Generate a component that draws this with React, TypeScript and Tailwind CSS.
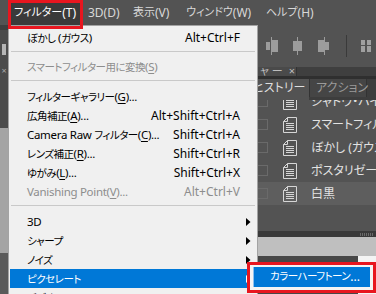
import type { ReactNode } from 'react';

type MenuItem =
  | { kind: 'sep'; line: string }
  | {
      kind: 'item';
      label: ReactNode;
      shortcut?: string;
      disabled?: boolean;
      sub?: boolean;
      active?: boolean;
    };

// Japanese runs are set a touch smaller so kana widths come near Meiryo UI
const J = ({ children }: { children: ReactNode }) => (
  <span className="text-[10.5px] tracking-[-0.5px]">{children}</span>
);
const B = ({ children }: { children: ReactNode }) => <span className="text-[11px]">{children}</span>;
const u = (c: string) => <span className="underline underline-offset-2">{c}</span>;

const menuItems: MenuItem[] = [
  { kind: 'item', label: <><J>ぼかし</J> (<J>ガウス</J>)</>, shortcut: 'Alt+Ctrl+F' },
  { kind: 'sep', line: 'h-[10px] pt-[4px]' },
  { kind: 'item', label: <><J>スマートフィルター用に変換</J>({u('S')})</>, disabled: true },
  { kind: 'sep', line: 'h-[11px] pt-[4px]' },
  { kind: 'item', label: <><J>フィルターギャラリー</J>({u('G')})...</> },
  { kind: 'item', label: <><J>広角補正</J>({u('A')})...</>, shortcut: 'Alt+Shift+Ctrl+A' },
  { kind: 'item', label: <>Camera Raw <J>フィルター</J>({u('C')})...</>, shortcut: 'Shift+Ctrl+A' },
  { kind: 'item', label: <><J>レンズ補正</J>({u('R')})...</>, shortcut: 'Shift+Ctrl+R' },
  { kind: 'item', label: <><J>ゆがみ</J>({u('L')})...</>, shortcut: 'Shift+Ctrl+X' },
  { kind: 'item', label: <>Vanishing Point({u('V')})...</>, shortcut: 'Alt+Ctrl+V', disabled: true },
  { kind: 'sep', line: 'h-[11px] pt-[4px]' },
  { kind: 'item', label: '3D', sub: true },
  { kind: 'item', label: <J>シャープ</J>, sub: true },
  { kind: 'item', label: <J>ノイズ</J>, sub: true },
  { kind: 'item', label: <J>ピクセレート</J>, sub: true, active: true },
  { kind: 'item', label: <J>ビデオ</J>, sub: true },
];

const historyRows = [
  { label: 'シャドウ・ハイライト', selected: false },
  { label: 'スマートフィルター', selected: false },
  { label: 'ぼかし (ガウス)', selected: false },
  { label: 'ポスタリゼーション', selected: false },
  { label: '白黒', selected: true },
];

function Arrow({ white }: { white?: boolean }) {
  return (
    <svg width="5" height="8" viewBox="0 0 5 8">
      <polygon points="0,0 4.5,4 0,8" fill={white ? '#ffffff' : '#000000'} />
    </svg>
  );
}

function DocIcon() {
  return (
    <svg width="14" height="16" viewBox="0 0 14 16" fill="none" stroke="#d6d6d6">
      <path d="M4.5 0.5 H13.5 V15.5 H0.5 V4.5 Z" />
      <path d="M0.5 4.5 H4.5 V0.5" />
      <path d="M3 6.5 H11 M3 8.5 H11 M3 10.5 H11 M3 12.5 H11" />
    </svg>
  );
}

function AlignIcon({ variant }: { variant: number }) {
  return (
    <svg width="13" height="18" viewBox="0 0 13 18" fill="#9c9c9c">
      {variant === 0 && (
        <>
          <rect x="0" y="5" width="4" height="8" />
          <rect x="5" y="0" width="1" height="18" />
          <rect x="6" y="3" width="6" height="12" />
        </>
      )}
      {variant === 1 && (
        <>
          <rect x="1" y="4" width="4" height="10" />
          <rect x="5" y="0" width="1" height="18" />
          <rect x="6" y="4" width="4" height="10" />
        </>
      )}
      {variant === 2 && (
        <>
          <rect x="1" y="3" width="6" height="12" />
          <rect x="7" y="0" width="1" height="18" />
          <rect x="8" y="5" width="4" height="8" />
        </>
      )}
    </svg>
  );
}

export default function App() {
  return (
    <div className="relative flex h-[294px] w-[376px] flex-col overflow-hidden bg-[#535353] font-['Noto_Sans','Noto_Sans_CJK_JP',sans-serif] [font-feature-settings:'palt']">
      {/* Menu bar */}
      <div className="flex h-[25px] shrink-0 items-stretch pl-[11px] text-[12px] text-[#d8d8d8]">
        <span className="flex w-[69px] shrink-0 items-center bg-[#3a3a3a] pl-[3px] whitespace-nowrap text-white">
          <B>フィルター</B>(T)
        </span>
        <span className="ml-[8px] flex w-[45px] shrink-0 items-center whitespace-nowrap">3D(D)</span>
        <span className="flex w-[53px] shrink-0 items-center whitespace-nowrap">
          <B>表示</B>(V)
        </span>
        <span className="flex w-[80px] shrink-0 items-center whitespace-nowrap">
          <B>ウィンドウ</B>(W)
        </span>
        <span className="flex shrink-0 items-center whitespace-nowrap">
          <B>ヘルプ</B>(H)
        </span>
      </div>

      {/* Workspace behind the menu */}
      <div className="flex flex-1">
        <div className="flex w-[8px] shrink-0 flex-col">
          <div className="h-[5px] bg-[#3e3e3e]" />
          <div className="flex h-[98px] flex-col items-center bg-[#4b4b4b] pt-[14px]">
            <div className="h-[11px] w-[4px] bg-[#b5b5b5]" />
            <span className="mt-[11px] text-[9px] leading-none text-[#a8a8a8]">×</span>
          </div>
          <div className="h-[125px] bg-[#a4a4a4]" />
          <div className="flex-1 bg-[#5a5a5a]" />
        </div>
        <div className="flex-1" />
        <div className="flex w-[126px] shrink-0 flex-col">
          {/* toolbar */}
          <div className="flex h-[42px] shrink-0 items-center pl-[16px]">
            <AlignIcon variant={0} />
            <div className="w-[13px]" />
            <AlignIcon variant={1} />
            <div className="w-[12px]" />
            <AlignIcon variant={2} />
            <div className="ml-[16px] h-[22px] w-px bg-[#3a3a3a]" />
            <svg className="ml-[14px]" width="10" height="12" viewBox="0 0 10 12" fill="#a0a0a0">
              <rect x="0" y="0" width="4" height="12" />
              <rect x="6" y="0" width="4" height="12" />
              <rect x="0" y="5" width="10" height="1" fill="#535353" />
            </svg>
          </div>
          {/* partially hidden tab strip */}
          <div className="flex h-[9px] shrink-0 overflow-hidden bg-[#3f3f3f]">
            <div className="flex w-[47px] items-end gap-[6px] overflow-hidden border-r border-[#333333] bg-[#4a4a4a] pl-[10px] text-[11px] leading-[10px] whitespace-nowrap text-[#bdbdbd]">
              <span>ャ ー</span>
              <span>×</span>
            </div>
          </div>
          <div className="h-[3px] shrink-0 bg-[#2f2f2f]" />
          {/* tabs */}
          <div className="flex h-[21px] shrink-0 bg-[#3d3d3d] text-[12px] whitespace-nowrap">
            <div className="flex w-[59px] shrink-0 items-center bg-[#535353] pb-[3px] pl-[3px] text-[#dedede]">ヒストリー</div>
            <div className="flex h-[18px] w-[58px] shrink-0 items-center border-x border-[#333333] bg-[#454545] pl-[6px] text-[#9a9a9a]">
              アクション
            </div>
          </div>
          {/* history list */}
          <div className="h-[131px] shrink-0 overflow-hidden">
            <div className="-mt-[10px]">
              {historyRows.map((row, i) => (
                <div
                  key={i}
                  className={`flex h-[23px] items-center ${row.selected ? 'bg-[#5e5e5e]' : ''}`}
                >
                  <div className="ml-[7px] h-[11px] w-[11px] shrink-0 border border-[#6a6a6a]" />
                  <div className="ml-[15px] shrink-0">
                    <DocIcon />
                  </div>
                  <span className="ml-[14px] shrink-0 whitespace-nowrap text-[12px] text-[#e2e2e2]">{row.label}</span>
                </div>
              ))}
            </div>
          </div>
          <div className="flex h-[6px] shrink-0 items-center justify-end bg-[#393939] pr-[2px]">
            <div className="h-[3px] w-[14px] bg-[repeating-linear-gradient(90deg,#6a6a6a_0_1px,transparent_1px_2px)]" />
          </div>
          <div className="h-[19px] shrink-0 bg-[#bfbfbf]" />
          <div className="flex flex-1">
            <div className="flex-1 bg-[#474747]" />
            <div className="w-[18px] bg-[#f4f4f4]" />
          </div>
        </div>
      </div>

      {/* Filter dropdown menu */}
      <div className="absolute left-[8px] top-[25px] w-[250px] border border-[#a3a3a3] bg-[#f0f0f0] p-[1px] pt-[2px] text-[11.5px] tracking-[-0.3px]">
        {menuItems.map((item, i) =>
          item.kind === 'sep' ? (
            <div key={i} className={`${item.line} px-[1px]`}>
              <div className="h-px bg-[#c9c9c9]" />
            </div>
          ) : (
            <div
              key={i}
              className={`flex h-[19px] items-center pl-[17px] ${
                item.active ? 'bg-[#0078d7] text-white' : item.disabled ? 'text-[#8d8d8d]' : 'text-black'
              }`}
            >
              <span className="whitespace-nowrap">{item.label}</span>
              <span className="flex-1" />
              {item.shortcut && (
                <span className="text-[12px] tracking-normal whitespace-nowrap">{item.shortcut}</span>
              )}
              <span className="flex w-[16px] shrink-0 items-center pl-[6px]">
                {item.sub && <Arrow white={item.active} />}
              </span>
            </div>
          ),
        )}
      </div>

      {/* Pixelate submenu, boxed in red */}
      <div className="absolute left-[247px] top-[262px] h-[31px] w-[129px] border-[3px] border-[#e8161f] bg-[#f4f4f4] p-[2px] pl-[3px]">
        <div className="flex h-[20px] w-[117px] items-center border-l border-[#8cc0ee] bg-[#0078d7] pl-[16px] text-[12px] whitespace-nowrap text-white">
          <J>カラーハーフトーン</J>...
        </div>
      </div>

      {/* Red highlight around the Filter menu title */}
      <div className="absolute left-[8px] top-0 h-[29px] w-[75px] border-[3px] border-[#e8161f]" />
    </div>
  );
}
